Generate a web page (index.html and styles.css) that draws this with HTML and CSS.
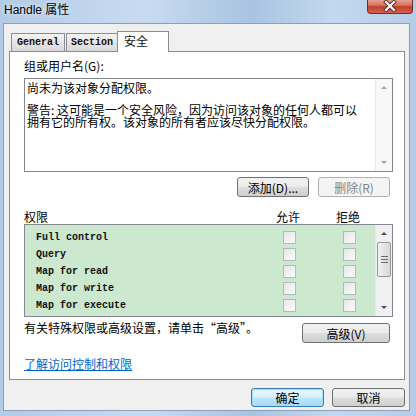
FILE: index.html
```html
<!DOCTYPE html>
<html lang="zh-CN">
<head>
    <meta charset="UTF-8">
    <title>Handle 属性</title>
    <link rel="stylesheet" href="styles.css">
</head>
<body>
    <div class="window">
        <div class="titlebar">
            <span class="title">Handle 属性</span>
            <div class="close-btn">
                <svg width="16" height="12" viewBox="0 0 16 12">
                    <path d="M4 2 L12 10 M12 2 L4 10" stroke="#5a2a24" stroke-width="4" stroke-linecap="square"/>
                    <path d="M4 2 L12 10 M12 2 L4 10" stroke="#ffffff" stroke-width="2.2" stroke-linecap="square"/>
                </svg>
            </div>
        </div>

        <div class="client">
            <div class="tabs">
                <div class="tab general">General</div>
                <div class="tab section">Section</div>
                <div class="tab active">安全</div>
            </div>

            <div class="panel">
                <div class="label">组或用户名(G):</div>
                <div class="listbox users">
                    <div class="list-text">
                        <p class="note">尚未为该对象分配权限。</p>
                        <p class="warning">警告:&nbsp;这可能是一个安全风险，因为访问该对象的任何人都可以<br>拥有它的所有权。该对象的所有者应该尽快分配权限。</p>
                    </div>
                    <div class="scrollbar disabled">
                        <span class="arrow up"></span>
                        <span class="arrow down"></span>
                    </div>
                </div>

                <div class="button-row">
                    <button class="btn">添加(D)...</button>
                    <button class="btn" disabled>删除(R)</button>
                </div>

                <div class="perm-header">
                    <span>权限</span>
                    <span>允许</span>
                    <span>拒绝</span>
                </div>
                <div class="listbox perms">
                    <div class="perm-rows">
                        <div class="perm-row"><span>Full control</span><span class="check"></span><span class="check"></span></div>
                        <div class="perm-row"><span>Query</span><span class="check"></span><span class="check"></span></div>
                        <div class="perm-row"><span>Map for read</span><span class="check"></span><span class="check"></span></div>
                        <div class="perm-row"><span>Map for write</span><span class="check"></span><span class="check"></span></div>
                        <div class="perm-row"><span>Map for execute</span><span class="check"></span><span class="check"></span></div>
                    </div>
                    <div class="scrollbar">
                        <span class="arrow up"></span>
                        <span class="thumb"><i></i><i></i><i></i></span>
                        <span class="arrow down"></span>
                    </div>
                </div>

                <div class="advanced-row">
                    <span>有关特殊权限或高级设置，请单击“高级”。</span>
                    <button class="btn wide">高级(V)</button>
                </div>

                <a class="help-link" href="#">了解访问控制和权限</a>
            </div>

            <div class="dialog-buttons">
                <button class="btn default">确定</button>
                <button class="btn">取消</button>
            </div>
        </div>
    </div>
</body>
</html>
```

FILE: styles.css
```css
* {
    box-sizing: border-box;
}
body {
    margin: 0;
    width: 416px;
    height: 416px;
    overflow: hidden;
    font-family: "Noto Sans CJK SC", sans-serif;
    font-size: 12px;
    color: #000;
}
.window {
    width: 416px;
    height: 416px;
    display: flex;
    flex-direction: column;
    padding: 0 6px 5px 3px;
    background: linear-gradient(90deg, #b3cbe6 0%, #c8dbf0 35%, #a9c3e1 60%, #c3d8ee 80%, #b6cde8 100%);
}
.titlebar {
    height: 23px;
    display: flex;
    justify-content: space-between;
    align-items: flex-start;
}
.title {
    font-family: "Liberation Sans", "Noto Sans CJK SC", sans-serif;
    font-size: 12px;
    line-height: 20px;
    padding-left: 1px;
    text-shadow: 0 0 5px rgba(255, 255, 255, 0.9);
}
.close-btn {
    width: 46px;
    height: 15px;
    margin-right: -3px;
    margin-top: -1px;
    display: flex;
    justify-content: center;
    align-items: center;
    border: 1px solid #6b2f28;
    border-top: none;
    border-radius: 0 0 4px 4px;
    background: linear-gradient(#e9a99d, #d7725f 45%, #c0402b 55%, #d4624d);
}
.client {
    flex: 1;
    display: flex;
    flex-direction: column;
    background: #f0f0f0;
    border: 1px solid #8aa0ba;
    padding: 7px 4px 0 5px;
}

/* tabs */
.tabs {
    display: flex;
    align-items: flex-end;
    height: 20px;
    padding-left: 2px;
}
.tab {
    height: 18px;
    border: 1px solid #898c95;
    border-bottom: none;
    background: linear-gradient(#f3f3f3, #e6e6e6 50%, #d9d9d9);
    font-family: "Liberation Mono", monospace;
    font-size: 10px;
    font-weight: bold;
    line-height: 17px;
    text-align: center;
    color: #111;
}
.tab.general {
    width: 54px;
    margin-right: 1px;
}
.tab.section {
    width: 52px;
}
.tab.active {
    width: 52px;
    height: 21px;
    margin-left: -1px;
    margin-bottom: -1px;
    position: relative;
    z-index: 1;
    background: #fff;
    font-family: "Noto Sans CJK SC", sans-serif;
    font-size: 12px;
    font-weight: normal;
    text-align: left;
    padding-left: 6px;
    line-height: 18px;
}

/* panel */
.panel {
    height: 329px;
    border: 1px solid #898c95;
    background: #fff;
    padding: 0 11px 0 14px;
    display: flex;
    flex-direction: column;
}
.label {
    margin-top: 7px;
    line-height: 14px;
}
.listbox {
    display: flex;
    border: 1px solid #828790;
}
.listbox.users {
    margin-top: 5px;
    height: 94px;
}
.list-text {
    flex: 1;
    padding: 2px 0 0 2px;
}
.list-text p {
    margin: 0;
}
.note {
    line-height: 14px;
}
.list-text .warning {
    margin-top: 9px;
    line-height: 12px;
}
.scrollbar {
    width: 17px;
    display: flex;
    flex-direction: column;
    background: #f0f0f0;
    border-left: 1px solid #e8e8e8;
}
.scrollbar.disabled {
    background: #f8f8f8;
}
.arrow {
    height: 17px;
    display: flex;
    justify-content: center;
    align-items: center;
}
.arrow::before {
    content: "";
    border-left: 3px solid transparent;
    border-right: 3px solid transparent;
}
.arrow.up::before {
    border-bottom: 3px solid #4d4d4d;
}
.arrow.down {
    margin-top: auto;
}
.arrow.down::before {
    border-top: 3px solid #4d4d4d;
}
.scrollbar.disabled .arrow.up::before {
    border-bottom-color: #a3a3a3;
}
.scrollbar.disabled .arrow.down::before {
    border-top-color: #a3a3a3;
}
.thumb {
    height: 35px;
    margin: 0 1px;
    border: 1px solid #979797;
    border-radius: 2px;
    background: linear-gradient(90deg, #f3f3f3, #e4e4e4 50%, #d8d8d8);
    display: flex;
    flex-direction: column;
    justify-content: center;
    align-items: center;
    gap: 2px;
}
.thumb i {
    width: 7px;
    height: 1px;
    background: #6a6a6a;
}

/* buttons */
.button-row {
    display: flex;
    justify-content: flex-end;
    gap: 9px;
    margin-top: 5px;
    padding-right: 3px;
}
.btn {
    width: 72px;
    height: 20px;
    padding: 0;
    border: 1px solid #707070;
    border-radius: 3px;
    background: linear-gradient(#f2f2f2, #ebebeb 48%, #dddddd 52%, #cfcfcf);
    font-family: "Noto Sans CJK SC", sans-serif;
    font-size: 12px;
    line-height: 17px;
    color: #000;
}
.btn:disabled {
    border-color: #adb2b5;
    background: #f4f4f4;
    color: #838383;
}
.btn.wide {
    width: 88px;
    margin-top: 2px;
}
.btn.default {
    width: 73px;
    border-color: #3c7fb1;
    box-shadow: inset 0 0 0 1px #9fdcf5;
    background: linear-gradient(#eaf6fd, #d9f0fc 48%, #bee6fd 52%, #a7d9f5);
}

/* permissions */
.perm-header {
    display: grid;
    grid-template-columns: 252px 60px 24px;
    margin-top: 13px;
    line-height: 14px;
}
.listbox.perms {
    height: 93px;
    background: #cce8cf;
}
.perm-rows {
    flex: 1;
    padding: 4px 0 0 11px;
}
.perm-row {
    height: 17px;
    display: grid;
    grid-template-columns: 247px 60px 13px;
    align-items: center;
    font-family: "Liberation Mono", monospace;
    font-size: 10px;
    font-weight: bold;
    color: #111;
}
.check {
    width: 13px;
    height: 13px;
    border: 1px solid #b8b8b8;
    background: linear-gradient(135deg, #e6e6e6, #fbfbfb);
}
.advanced-row {
    display: flex;
    justify-content: space-between;
    align-items: flex-start;
    margin-top: 4px;
    padding-right: 3px;
    line-height: 14px;
}
.help-link {
    margin-top: 14px;
    line-height: 14px;
    color: #0066cc;
    align-self: flex-start;
}

.dialog-buttons {
    display: flex;
    justify-content: flex-end;
    gap: 8px;
    margin-top: 8px;
}
.dialog-buttons .btn {
    width: 73px;
    height: 19px;
    line-height: 16px;
}
```
